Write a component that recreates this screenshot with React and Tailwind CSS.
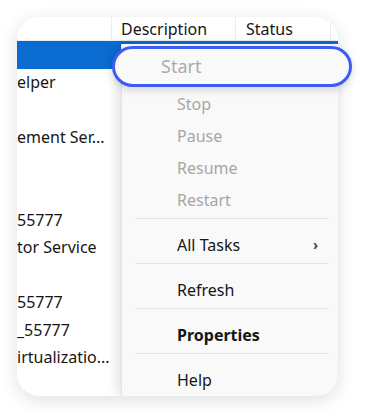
import React from 'react';

const font = { fontFamily: '"Noto Sans", "Open Sans", sans-serif' };

// rows of the services list (only the tail of the name column is in view)
const rows = [
  '',
  'elper',
  '',
  'ement Ser...',
  '',
  '',
  '55777',
  'tor Service',
  '',
  '55777',
  '_55777',
  'irtualizatio...',
];

const MenuItem = ({ label, disabled, bold, arrow }) => (
  <div className="h-8 flex items-center justify-between pl-[55px] pr-[20px]">
    <span
      className={`text-[16px] ${bold ? 'font-bold' : ''} ${
        disabled ? 'text-[#a6a6a6]' : 'text-[#161616]'
      }`}
    >
      {label}
    </span>
    {arrow && <span className="text-[14px] font-bold text-[#444] leading-none">›</span>}
  </div>
);

const Sep = () => <div className="mt-[2px] mb-[10px] ml-[13px] mr-[9px] h-px bg-[#e3e3e3]" />;

const App = () => {
  return (
    <div className="w-[370px] h-[413px] bg-white pt-[17px] pl-[17px]" style={font}>
      <div className="relative w-[321px] h-[379px]">
        <div className="w-full h-full rounded-[22px] overflow-hidden bg-white shadow-[0_4px_18px_rgba(0,0,0,0.13)] relative">
          {/* header */}
          <div className="h-6 flex border-b border-[#ececec] text-[16px] text-[#161616]">
            <div className="w-[95px] border-r border-[#ececec]" />
            <div className="w-[124px] pl-[9px] border-r border-[#ececec] leading-6">Description</div>
            <div className="w-[95px] pl-[10px] border-r border-[#ececec] leading-6">Status</div>
          </div>
          {/* list */}
          <div className="flex flex-col">
            {rows.map((text, i) => (
              <div
                key={i}
                className={`h-[27.5px] flex items-center whitespace-nowrap text-[16px] text-[#161616] ${
                  i === 0 ? 'bg-[#0a6cd0]' : ''
                }`}
              >
                {text}
              </div>
            ))}
          </div>
          {/* context menu */}
          <div className="absolute left-[104px] top-[27px] right-0 bottom-0 bg-[#f9f9f9] border-l border-[#e3e3e3] shadow-[-5px_0_10px_rgba(0,0,0,0.1)] pt-[12px]">
            <div className="h-8" />
            <MenuItem label="Stop" disabled />
            <MenuItem label="Pause" disabled />
            <MenuItem label="Resume" disabled />
            <MenuItem label="Restart" disabled />
            <Sep />
            <MenuItem label="All Tasks" arrow />
            <Sep />
            <MenuItem label="Refresh" />
            <Sep />
            <MenuItem label="Properties" bold />
            <Sep />
            <MenuItem label="Help" />
          </div>
        </div>
        {/* highlighted Start item */}
        <div className="absolute left-[95px] top-[29px] w-[240px] h-[41px] rounded-full border-[3px] border-[#3d5cf5] bg-[#f9f9f9] shadow-[0_3px_8px_rgba(0,0,0,0.15)] flex items-center pl-[46px]">
          <span className="text-[18px] text-[#ababab] leading-none pb-[2px]">Start</span>
        </div>
      </div>
    </div>
  );
};

export default App;
